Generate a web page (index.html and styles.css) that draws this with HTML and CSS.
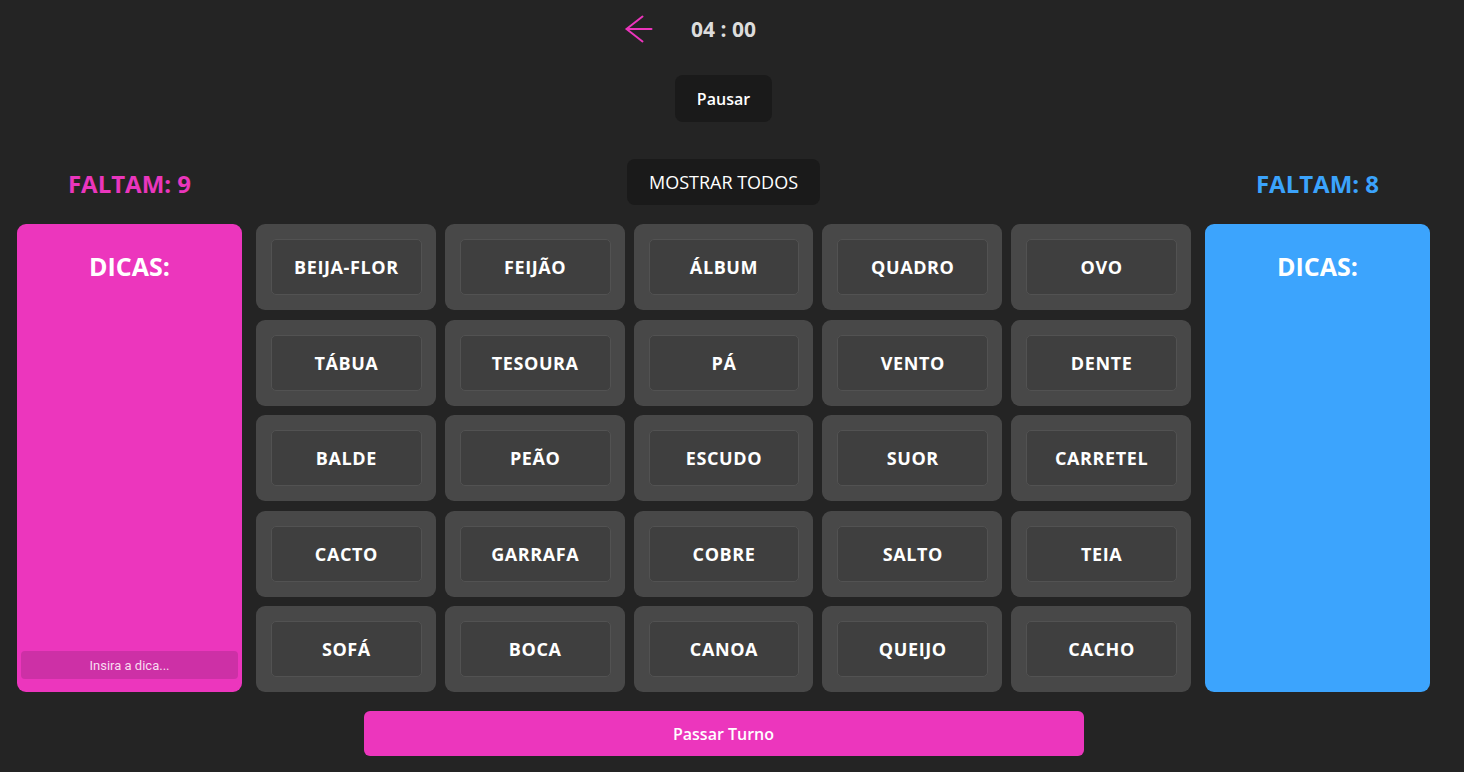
FILE: index.html
```html
<!DOCTYPE html>
<html lang="pt">
<head>
<meta charset="utf-8">
<title>Jogo</title>
<link rel="stylesheet" href="styles.css">
</head>
<body>
<div class="app">
  <header class="top">
    <button class="back" aria-label="Voltar">
      <svg width="28" height="28" viewBox="0 0 28 28" fill="none" stroke="#ec35bc" stroke-width="2" stroke-linecap="round" stroke-linejoin="round"><path d="M1.5 14H26.5"/><path d="M17.5 1.5L1.5 14L17.5 26.5"/></svg>
    </button>
    <div class="timer">04 : 00</div>
    <div></div>
  </header>
  <div class="pause-row"><button class="dark-btn pause">Pausar</button></div>
  <div class="cols row2">
    <div class="faltam pink">FALTAM: 9</div>
    <div class="center"><button class="dark-btn show">MOSTRAR TODOS</button></div>
    <div class="faltam blue">FALTAM: 8</div>
  </div>
  <div class="cols main">
    <aside class="panel pink-bg">
      <h2>DICAS:</h2>
      <input class="hint" placeholder="Insira a dica...">
    </aside>
    <section class="grid">
      <div class="card"><div class="word">BEIJA-FLOR</div></div>
      <div class="card"><div class="word">FEIJÃO</div></div>
      <div class="card"><div class="word">ÁLBUM</div></div>
      <div class="card"><div class="word">QUADRO</div></div>
      <div class="card"><div class="word">OVO</div></div>
      <div class="card"><div class="word">TÁBUA</div></div>
      <div class="card"><div class="word">TESOURA</div></div>
      <div class="card"><div class="word">PÁ</div></div>
      <div class="card"><div class="word">VENTO</div></div>
      <div class="card"><div class="word">DENTE</div></div>
      <div class="card"><div class="word">BALDE</div></div>
      <div class="card"><div class="word">PEÃO</div></div>
      <div class="card"><div class="word">ESCUDO</div></div>
      <div class="card"><div class="word">SUOR</div></div>
      <div class="card"><div class="word">CARRETEL</div></div>
      <div class="card"><div class="word">CACTO</div></div>
      <div class="card"><div class="word">GARRAFA</div></div>
      <div class="card"><div class="word">COBRE</div></div>
      <div class="card"><div class="word">SALTO</div></div>
      <div class="card"><div class="word">TEIA</div></div>
      <div class="card"><div class="word">SOFÁ</div></div>
      <div class="card"><div class="word">BOCA</div></div>
      <div class="card"><div class="word">CANOA</div></div>
      <div class="card"><div class="word">QUEIJO</div></div>
      <div class="card"><div class="word">CACHO</div></div>
    </section>
    <aside class="panel blue-bg">
      <h2>DICAS:</h2>
    </aside>
  </div>
  <div class="pass-row"><button class="pass">Passar Turno</button></div>
</div>
</body>
</html>
```

FILE: styles.css
```css
* { box-sizing: border-box; }
html, body { margin: 0; padding: 0; }
body {
  background: #242424;
  color: #fff;
  font-family: "Open Sans", "Noto Sans", sans-serif;
  height: 772px;
  overflow: hidden;
}
.app {
  width: 1413px;
  margin-left: 17px;
}
.top {
  display: grid;
  grid-template-columns: 1fr auto 1fr;
  align-items: center;
  height: 57px;
}
.back {
  justify-self: end;
  margin-right: 38px;
  background: none;
  border: 0;
  padding: 0;
  display: flex;
}
.timer {
  font-size: 21px;
  font-weight: 700;
  color: #dcdcdc;
}
.pause-row { display: flex; justify-content: center; margin-top: 18px; }
.dark-btn {
  background: #1a1a1a;
  border: 0;
  border-radius: 8px;
  color: #fff;
  font-family: "Open Sans", "Noto Sans", sans-serif;
}
.pause {
  height: 47px;
  padding: 0 22px;
  font-size: 16px;
  font-weight: 600;
}
.cols {
  display: grid;
  grid-template-columns: 225px 1fr 225px;
  column-gap: 14px;
}
.row2 {
  margin-top: 37px;
  align-items: center;
  height: 46px;
}
.center { display: flex; justify-content: center; }
.show {
  height: 46px;
  padding: 0 22px;
  font-size: 18px;
  font-weight: 500;
}
.faltam {
  text-align: center;
  font-size: 24px;
  font-weight: 700;
  padding-top: 2px;
}
.pink { color: #ea36bd; }
.blue { color: #3ba3fc; }
.main {
  margin-top: 19px;
  height: 468px;
}
.panel {
  border-radius: 9px;
  display: flex;
  flex-direction: column;
  align-items: stretch;
  padding: 0 4px 13px;
}
.pink-bg { background: #ec36bd; }
.blue-bg { background: #3ca4fd; }
.panel h2 {
  margin: 25px 0 0;
  text-align: center;
  font-size: 25px;
  font-weight: 700;
  flex: 1;
}
.hint {
  height: 28px;
  border: 0;
  border-radius: 4px;
  background: #cd30a6;
  text-align: center;
  font-family: Roboto, "Liberation Sans", sans-serif;
  font-size: 13px;
  color: #fff;
  outline: none;
}
.hint::placeholder { color: #f8dcf0; opacity: 1; }
.grid {
  display: grid;
  grid-template-columns: repeat(5, 1fr);
  grid-template-rows: repeat(5, 1fr);
  gap: 9.5px 9px;
}
.card {
  background: #484848;
  border-radius: 9px;
  padding: 15px 14px 15px 15px;
  display: flex;
}
.word {
  flex: 1;
  background: #3f3f3f;
  border: 1px solid #525252;
  border-radius: 5px;
  display: flex;
  align-items: center;
  justify-content: center;
  font-size: 18px;
  font-weight: 700;
  letter-spacing: 0.6px;
}
.pass-row { display: flex; justify-content: center; margin-top: 19px; }
.pass {
  width: 720px;
  height: 45px;
  background: #ec36bd;
  border: 0;
  border-radius: 6px;
  color: #fff;
  font-family: "Open Sans", "Noto Sans", sans-serif;
  font-size: 16px;
  font-weight: 600;
}
```
